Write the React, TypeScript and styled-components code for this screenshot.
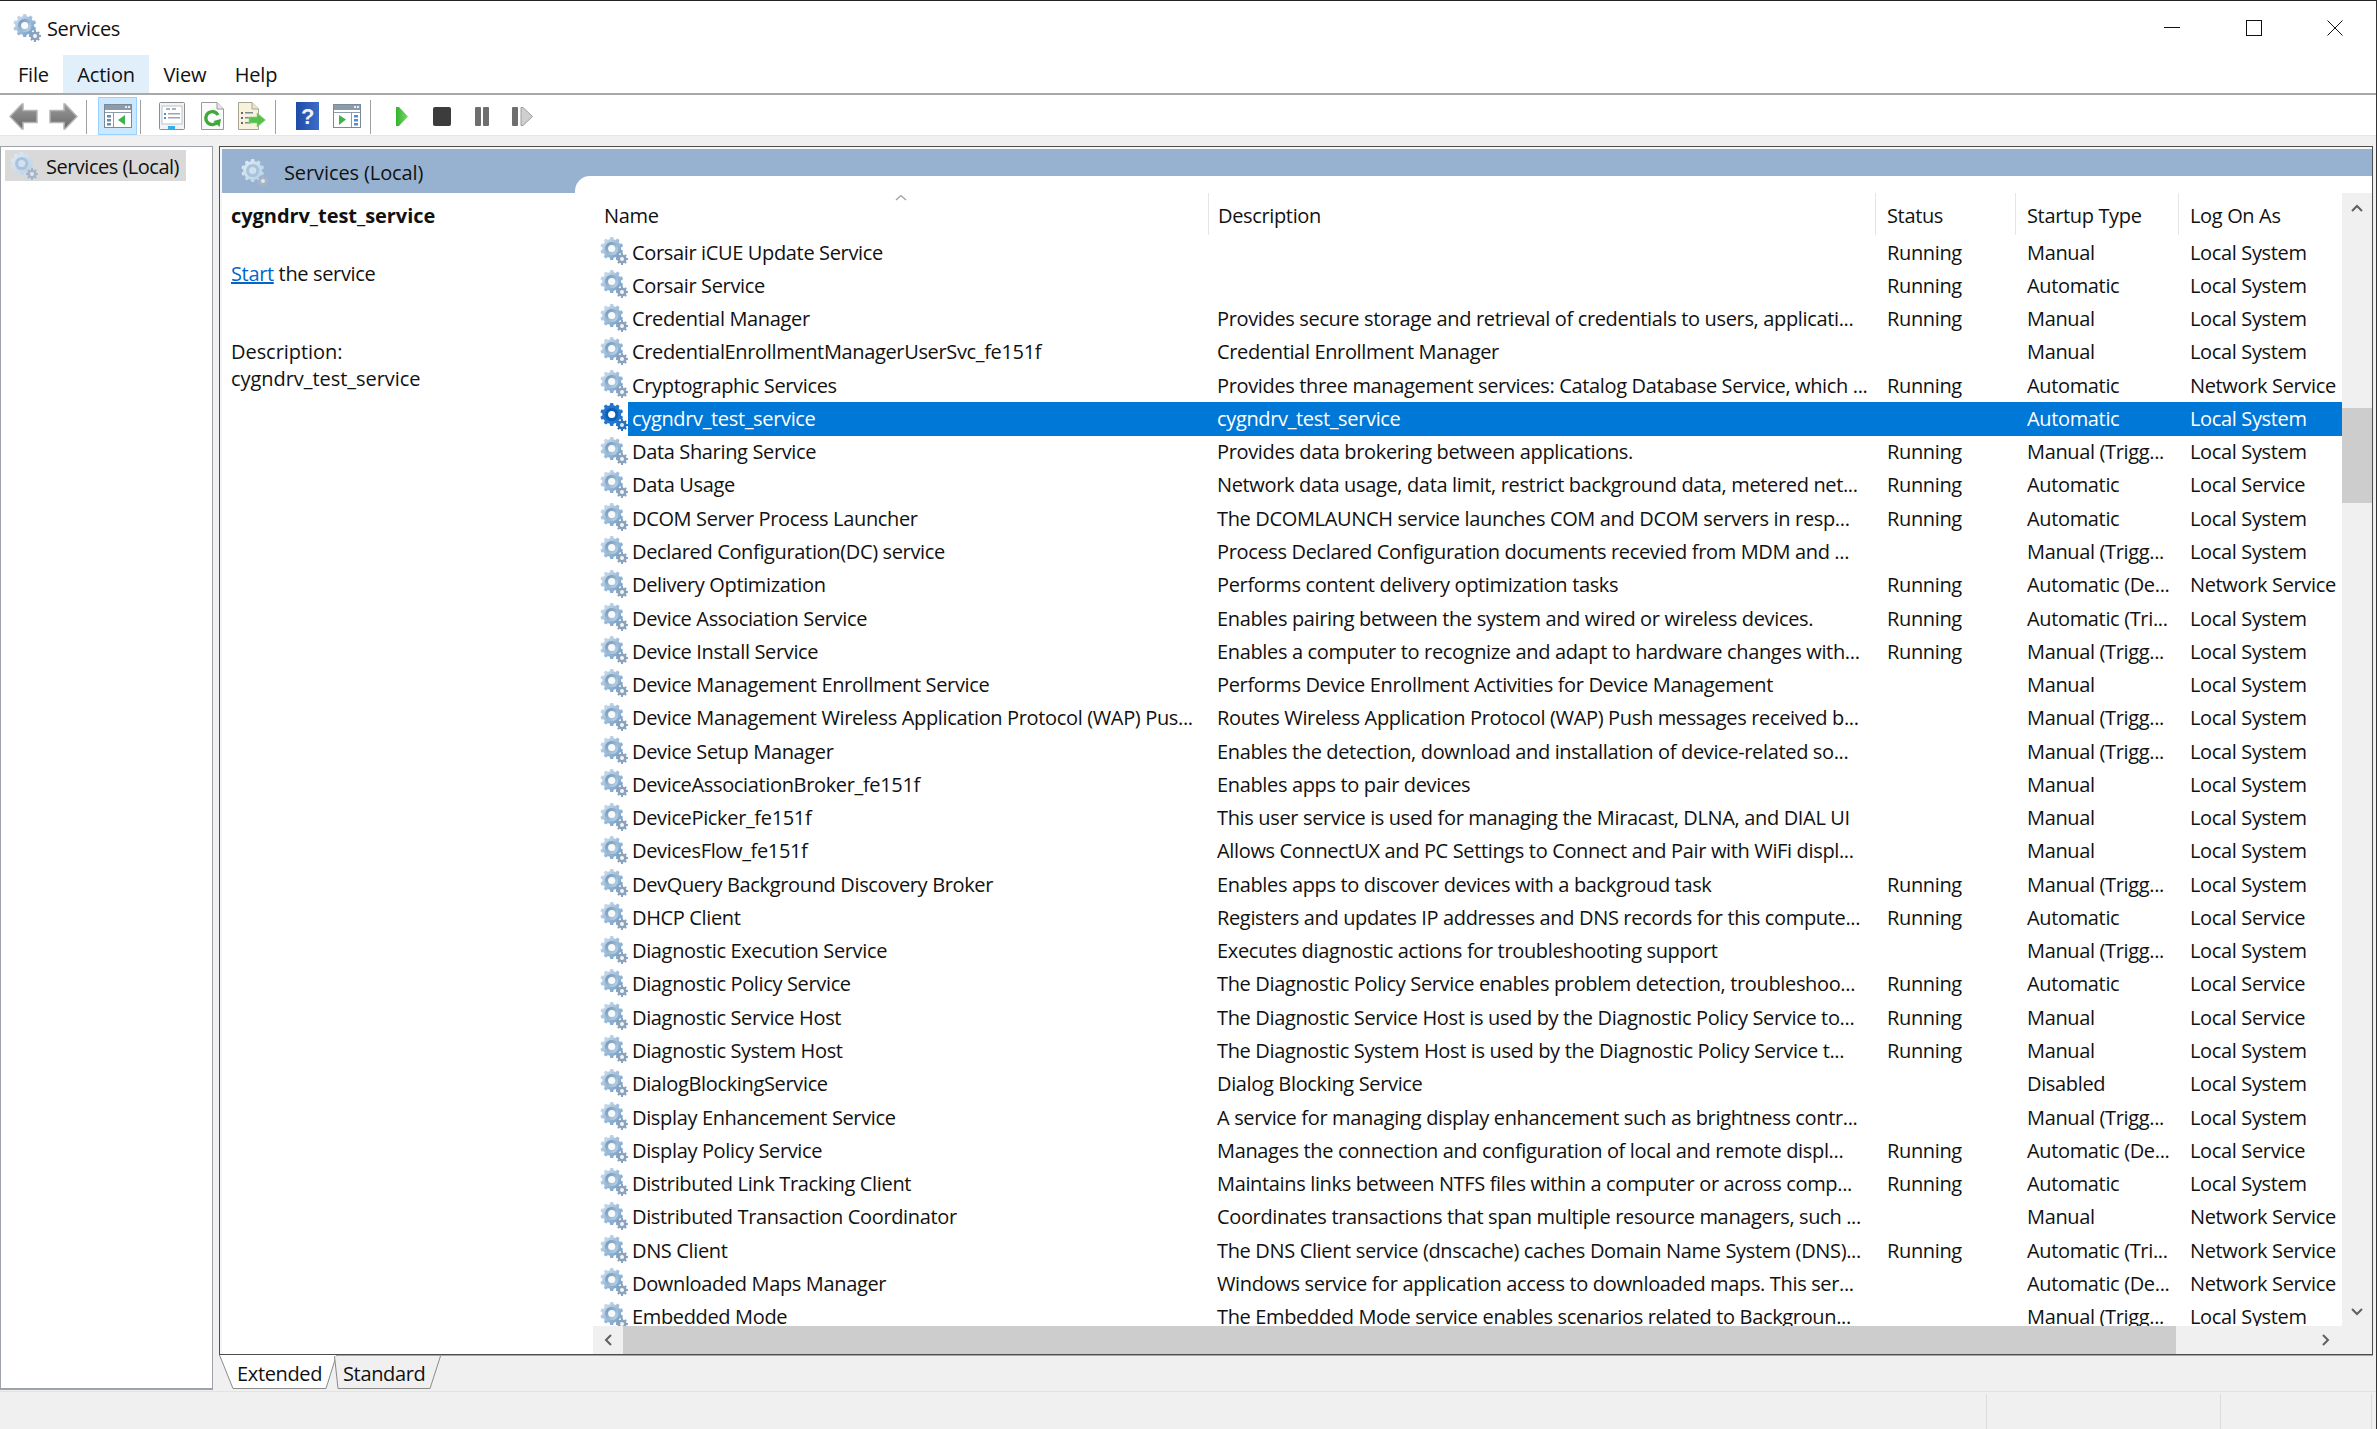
import React from 'react';
import styled, { createGlobalStyle } from 'styled-components';

const GlobalStyle = createGlobalStyle`
  html, body {
    margin: 0;
    padding: 0;
    background: #fff;
  }
  body {
    font-family: 'Open Sans', 'Noto Sans', 'Liberation Sans', sans-serif;
    font-size: 20px;
    letter-spacing: -0.35px;
    color: #111;
  }
`;

const Window = styled.div`
  box-sizing: border-box;
  width: 2377px;
  height: 1429px;
  display: flex;
  flex-direction: column;
  border-top: 1px solid #222;
  border-right: 1px solid #333;
  overflow: hidden;
`;

const TitleBar = styled.div`
  height: 54px;
  flex: none;
  display: flex;
  align-items: center;
  padding-left: 13px;
`;

const TitleText = styled.div`
  flex: 1;
  margin-left: 6px;
`;

const WinButton = styled.div`
  width: 81.5px;
  height: 54px;
  display: flex;
  align-items: center;
  justify-content: center;
`;

const MenuBar = styled.div`
  height: 38px;
  flex: none;
  display: flex;
  padding-left: 4px;
  border-bottom: 2px solid #a9a9a9;
`;

const MenuItem = styled.div<{ $open?: boolean }>`
  padding: 1px 14.5px 0 14px;
  display: flex;
  align-items: center;
  letter-spacing: -0.2px;
  background: ${(p) => (p.$open ? '#e1effb' : 'transparent')};
`;

const Toolbar = styled.div`
  height: 40px;
  flex: none;
  display: flex;
  align-items: flex-end;
  padding-left: 3px;
`;

const ToolButton = styled.div<{ $active?: boolean }>`
  box-sizing: border-box;
  width: ${(p) => (p.$active ? '39px' : '40px')};
  height: 38px;
  display: flex;
  align-items: center;
  justify-content: center;
  background: ${(p) => (p.$active ? '#cce8ff' : 'transparent')};
  border: 1px solid ${(p) => (p.$active ? '#99d1ff' : 'transparent')};
`;

const ToolSep = styled.div`
  width: 1px;
  height: 34px;
  margin: 0 11px 1px 3px;
  background: #a0a0a0;
`;

const Gutter = styled.div`
  height: 11px;
  flex: none;
  background: #f0f0f0;
  border-top: 1px solid #e6e6e6;
  box-sizing: border-box;
`;

const Main = styled.div`
  flex: 1;
  min-height: 0;
  display: flex;
  background: #f0f0f0;
`;

const TreePane = styled.div`
  box-sizing: border-box;
  width: 213px;
  margin-bottom: 1px;
  padding: 3px 0 0 4px;
  background: #fff;
  border: 1px solid #9ea3a9;
  border-bottom-width: 2px;
`;

const TreeItem = styled.div`
  width: 181px;
  height: 31px;
  display: flex;
  align-items: center;
  gap: 8px;
  padding: 1px 0 0 5px;
  box-sizing: border-box;
  background: #d9d9d9;
  white-space: nowrap;
  letter-spacing: -0.5px;
`;

const RightColumn = styled.div`
  flex: 1;
  min-width: 0;
  margin: 0 3px 0 6px;
  display: flex;
  flex-direction: column;
`;

const ConsolePane = styled.div`
  box-sizing: border-box;
  flex: 1;
  min-height: 0;
  display: flex;
  flex-direction: column;
  padding: 2px 0 0 2px;
  background: #f6f6f6;
  border: 1px solid #4d4d4d;
  box-shadow: 0 1px 0 #a6a6a6;
`;

const PaneHeader = styled.div`
  height: 44px;
  flex: none;
  display: flex;
  background: #97b2d0;
`;

const PaneTitle = styled.div`
  width: 353px;
  display: flex;
  align-items: flex-end;
  gap: 15px;
  padding: 0 0 6px 19px;
  box-sizing: border-box;
  letter-spacing: -0.1px;
  span {
    margin-bottom: 1px;
  }
`;

const PaneNotch = styled.div`
  flex: 1;
  margin-top: 27px;
  background: #fff;
  border-top-left-radius: 15px;
`;

const PaneBody = styled.div`
  flex: 1;
  min-height: 0;
  display: flex;
  background: #fff;
`;

const InfoPanel = styled.div`
  width: 371px;
  flex: none;
  box-sizing: border-box;
  padding: 9px 0 0 9px;
  line-height: 27px;
`;

const InfoTitle = styled.div`
  font-weight: 700;
  letter-spacing: -0.05px;
`;

const InfoAction = styled.div`
  margin-top: 31px;
`;

const InfoDesc = styled.div`
  margin-top: 51px;
  letter-spacing: -0.05px;
`;

const StartLink = styled.a`
  color: #0066cc;
  text-decoration: underline;
`;

const ListArea = styled.div`
  flex: 1;
  min-width: 0;
  display: flex;
  flex-direction: column;
`;

const ListTop = styled.div`
  flex: 1;
  min-height: 0;
  display: flex;
`;

const ListViewport = styled.div`
  flex: 1;
  min-width: 0;
  overflow: hidden;
`;

const ListHeader = styled.div`
  height: 43px;
  display: grid;
  grid-template-columns: 615px 667px 140px 163px 164px;
`;

const HeaderCell = styled.div<{ $inset: number; $first?: boolean }>`
  position: relative;
  height: 42px;
  display: flex;
  align-items: center;
  padding: 2px 0 0 ${(p) => p.$inset}px;
  box-sizing: border-box;
  border-left: ${(p) => (p.$first ? 'none' : '1px solid #e5e5e5')};
`;

const SortMark = styled.svg`
  position: absolute;
  left: 302px;
  top: 1px;
`;

const Row = styled.div`
  height: 33.27px;
  display: flex;
`;

const RowIcon = styled.div`
  width: 35px;
  flex: none;
  padding: 1px 0 0 7px;
  box-sizing: border-box;
`;

const RowBody = styled.div<{ $selected?: boolean }>`
  flex: 1;
  display: grid;
  grid-template-columns: 580px 667px 140px 163px 164px;
  align-items: center;
  background: ${(p) => (p.$selected ? '#0078d7' : 'transparent')};
  color: ${(p) => (p.$selected ? '#fff' : 'inherit')};
`;

const Cell = styled.div<{ $inset: number }>`
  padding: 0 0 1px ${(p) => p.$inset}px;
  white-space: nowrap;
  overflow: hidden;
`;

const VScrollbar = styled.div`
  width: 30px;
  flex: none;
  display: flex;
  flex-direction: column;
  background: #f0f0f0;
`;

const VThumb = styled.div`
  height: 95px;
  margin-top: 185px;
  background: #cdcdcd;
`;

const ScrollArrow = styled.div`
  height: 30px;
  display: flex;
  align-items: center;
  justify-content: center;
`;

const VTrack = styled.div`
  flex: 1;
`;

const HScrollbar = styled.div`
  height: 28px;
  flex: none;
  display: flex;
  align-items: stretch;
  background: #f0f0f0;
`;

const HArrow = styled.div<{ $width: number }>`
  width: ${(p) => p.$width}px;
  display: flex;
  align-items: center;
  justify-content: center;
`;

const HThumb = styled.div`
  width: 1553px;
  background: #cdcdcd;
`;

const HTrack = styled.div`
  flex: 1;
`;

const TabStrip = styled.div`
  height: 36px;
  flex: none;
  display: flex;
`;

const Tab = styled.div<{ $width: number; $lead: number; $overlap?: boolean }>`
  position: relative;
  width: ${(p) => p.$width}px;
  height: 35px;
  margin-left: ${(p) => (p.$overlap ? '-3px' : '0')};
  padding: 2px 0 0 ${(p) => p.$lead}px;
  box-sizing: border-box;
  display: flex;
  align-items: center;
`;

const TabShape = styled.svg`
  position: absolute;
  left: 0;
  top: 0;
`;

const TabLabel = styled.span`
  position: relative;
`;

const StatusBar = styled.div`
  height: 38px;
  flex: none;
  display: flex;
  box-sizing: border-box;
  background: #f0f0f0;
  border-top: 1px solid #e3e3e3;
  padding-right: 4px;
`;

const StatusCell = styled.div<{ $width?: number }>`
  ${(p) => (p.$width ? `width: ${p.$width}px;` : 'flex: 1;')}
  margin-top: 2px;
  border-right: 1px solid #dcdcdc;
`;

const HiddenDefs = styled.svg`
  position: absolute;
  width: 0;
  height: 0;
`;

// one tooth = 4 corners, good enough for a 28px icon
function gearPath(cx: number, cy: number, ro: number, ri: number, teeth: number) {
  const pts: string[] = [];
  const step = (Math.PI * 2) / teeth;
  for (let i = 0; i < teeth; i++) {
    const a = i * step - Math.PI / 2;
    const corners: [number, number][] = [
      [a - step * 0.34, ri],
      [a - step * 0.2, ro],
      [a + step * 0.2, ro],
      [a + step * 0.34, ri],
    ];
    corners.forEach(([t, r]) => {
      pts.push(`${(cx + Math.cos(t) * r).toFixed(2)},${(cy + Math.sin(t) * r).toFixed(2)}`);
    });
  }
  return `M${pts.join('L')}Z`;
}

const bigGear = gearPath(11.7, 11.5, 11.5, 9.4, 10);
const smallGear = gearPath(22, 22, 6, 4.4, 8);

type GearTone = 'normal' | 'selected' | 'pale';

const gearColors: Record<GearTone, { ring: string; core: string; hole: string; small: string; smallHole: string }> = {
  normal: { ring: 'url(#gearRing)', core: 'url(#gearCore)', hole: '#f6fafd', small: '#8aa2bb', smallHole: '#f2f5f8' },
  selected: { ring: '#2475cf', core: '#0b5fb5', hole: '#fff', small: '#2a6fb8', smallHole: '#d8e8f7' },
  pale: { ring: 'url(#gearPale)', core: '#a8c3dc', hole: '#d3e1ee', small: '#a3b5c7', smallHole: '#dfe7ef' },
};

function Gear({ tone = 'normal' }: { tone?: GearTone }) {
  const c = gearColors[tone];
  return (
    <svg width='28' height='28' viewBox='0 0 28 28' style={{ flex: 'none', display: 'block' }}>
      <path d={bigGear} fill={c.ring} />
      <circle cx='11.7' cy='11.5' r='6.6' fill={c.core} />
      <circle cx='11.7' cy='11.5' r='3.6' fill={c.hole} />
      <path d={smallGear} fill={c.small} />
      <circle cx='22' cy='22' r='2' fill={c.smallHole} />
    </svg>
  );
}

function Chevron({ dir, color = '#606060' }: { dir: 'up' | 'down' | 'left' | 'right'; color?: string }) {
  const d = {
    up: 'M1 7 L6 2 L11 7',
    down: 'M1 2 L6 7 L11 2',
    left: 'M7 1 L2 6 L7 11',
    right: 'M2 1 L7 6 L2 11',
  }[dir];
  const horizontal = dir === 'up' || dir === 'down';
  return (
    <svg width={horizontal ? 12 : 9} height={horizontal ? 9 : 12} viewBox={horizontal ? '0 0 12 9' : '0 0 9 12'}>
      <path d={d} fill='none' stroke={color} strokeWidth='2' />
    </svg>
  );
}

function ArrowIcon({ flip }: { flip?: boolean }) {
  return (
    <svg width='29' height='27' viewBox='0 0 29 27' style={flip ? { transform: 'scaleX(-1)' } : undefined}>
      <path
        d='M1 13.5 L13 1 L14 1 L14 7.5 L28 7.5 L28 19.5 L14 19.5 L14 26 L13 26 Z'
        fill='url(#arrowFill)'
        stroke='#b5b5b5'
        strokeWidth='1.5'
      />
    </svg>
  );
}

function PaneToggleIcon({ right }: { right?: boolean }) {
  return (
    <svg width='28' height='24' viewBox='0 0 28 24'>
      <rect x='0.5' y='0.5' width='27' height='23' fill='#fff' stroke='#7b8a99' />
      <rect x='1' y='1' width='26' height='5' fill='#8e9bab' />
      <rect x='21' y='2' width='2' height='2' fill='#e8edf2' />
      <rect x='24' y='2' width='2' height='2' fill='#e8edf2' />
      <rect x='1' y='8' width='26' height='1' fill='#8e9bab' />
      {right ? (
        <>
          <path d='M6 11 L13 15.5 L6 21 Z' fill='#3bb54a' />
          <rect x='18' y='9' width='1' height='14' fill='#8e9bab' />
          <rect x='21' y='11' width='4' height='2.5' fill='#4f8fd0' />
          <rect x='21' y='15' width='4' height='2.5' fill='#4f8fd0' />
          <rect x='21' y='19' width='4' height='2.5' fill='#4f8fd0' />
        </>
      ) : (
        <>
          <rect x='3' y='11' width='4' height='2.5' fill='#6c8cab' />
          <rect x='3' y='15' width='4' height='2.5' fill='#6c8cab' />
          <rect x='3' y='19' width='4' height='2.5' fill='#6c8cab' />
          <rect x='9' y='9' width='1' height='14' fill='#8e9bab' />
          <path d='M21 11 L14 16 L21 21 Z' fill='#3bb54a' />
        </>
      )}
    </svg>
  );
}

function PropertiesIcon() {
  return (
    <svg width='26' height='28' viewBox='0 0 26 28'>
      <rect x='0.5' y='0.5' width='25' height='27' rx='1' fill='#f1f3f5' stroke='#8d8d8d' />
      <rect x='3' y='4' width='20' height='18' fill='#fff' stroke='#b8c2cc' />
      <rect x='7' y='6' width='4' height='2' fill='#a9b4bf' />
      <rect x='13' y='6' width='4' height='2' fill='#a9b4bf' />
      <rect x='5' y='11' width='2' height='2' fill='#4f8fd0' />
      <rect x='9' y='11' width='12' height='1.5' fill='#9aa6b2' />
      <rect x='5' y='15' width='2' height='2' fill='#4f8fd0' />
      <rect x='9' y='15' width='12' height='1.5' fill='#9aa6b2' />
      <rect x='9' y='24' width='7' height='3' fill='#35aee8' />
    </svg>
  );
}

function RefreshIcon() {
  return (
    <svg width='23' height='28' viewBox='0 0 23 28'>
      <path d='M0.5 0.5 H16 L22.5 7 V27.5 H0.5 Z' fill='#fbfbfb' stroke='#9a9a9a' />
      <path d='M16 0.5 V7 H22.5' fill='#e6e6e6' stroke='#9a9a9a' />
      <path d='M16.5 20 A6.5 6.5 0 1 1 17 13' fill='none' stroke='#3fa83a' strokeWidth='3.4' />
      <path d='M12.5 19 L20 17 L18.5 25 Z' fill='#3fa83a' />
    </svg>
  );
}

function ExportIcon() {
  return (
    <svg width='28' height='28' viewBox='0 0 28 28'>
      <path d='M0.5 0.5 H14 L20.5 7 V27.5 H0.5 Z' fill='#f8f2dc' stroke='#a8a393' />
      <path d='M14 0.5 V7 H20.5' fill='#ebe5cf' stroke='#a8a393' />
      <rect x='3' y='10' width='2' height='2' fill='#5c6a78' />
      <rect x='7' y='10' width='8' height='1.5' fill='#7e8994' />
      <rect x='3' y='15' width='2' height='2' fill='#5c6a78' />
      <rect x='7' y='15' width='6' height='1.5' fill='#7e8994' />
      <rect x='3' y='20' width='2' height='2' fill='#5c6a78' />
      <rect x='7' y='20' width='6' height='1.5' fill='#7e8994' />
      <path d='M11 15 H19 V11 L27.5 18 L19 25 V21 H11 Z' fill='#57c14d' stroke='#8bd683' strokeWidth='0.6' />
    </svg>
  );
}

function HelpIcon() {
  return (
    <svg width='23' height='28' viewBox='0 0 23 28'>
      <rect width='23' height='28' fill='url(#helpFill)' />
      <text x='11.5' y='22' textAnchor='middle' fontFamily='Liberation Sans, sans-serif' fontSize='22' fontWeight='700' fill='#f2f2f2'>
        ?
      </text>
    </svg>
  );
}

function PlayIcon() {
  return (
    <svg width='12' height='19' viewBox='0 0 12 19'>
      <path d='M0 0 H3 L12 9.5 L3 19 H0 Z' fill='url(#playFill)' />
    </svg>
  );
}

function StopIcon() {
  return (
    <svg width='18' height='19' viewBox='0 0 18 19'>
      <rect width='18' height='19' rx='2' fill='#3c3c3c' />
    </svg>
  );
}

function PauseIcon() {
  return (
    <svg width='14' height='19' viewBox='0 0 14 19'>
      <rect width='6' height='19' rx='1' fill='#6e6e6e' />
      <rect x='8' width='6' height='19' rx='1' fill='#6e6e6e' />
    </svg>
  );
}

function StepIcon() {
  return (
    <svg width='21' height='19' viewBox='0 0 21 19'>
      <rect width='6' height='19' rx='1' fill='#6e6e6e' />
      <path d='M9 0.5 H11 L20.5 9.5 L11 18.5 H9 Z' fill='#cfcfcf' stroke='#9c9c9c' />
    </svg>
  );
}

type Service = [string, string, string, string, string];

const services: Service[] = [
  ['Corsair iCUE Update Service', '', 'Running', 'Manual', 'Local System'],
  ['Corsair Service', '', 'Running', 'Automatic', 'Local System'],
  ['Credential Manager', 'Provides secure storage and retrieval of credentials to users, applicati...', 'Running', 'Manual', 'Local System'],
  ['CredentialEnrollmentManagerUserSvc_fe151f', 'Credential Enrollment Manager', '', 'Manual', 'Local System'],
  ['Cryptographic Services', 'Provides three management services: Catalog Database Service, which ...', 'Running', 'Automatic', 'Network Service'],
  ['cygndrv_test_service', 'cygndrv_test_service', '', 'Automatic', 'Local System'],
  ['Data Sharing Service', 'Provides data brokering between applications.', 'Running', 'Manual (Trigg...', 'Local System'],
  ['Data Usage', 'Network data usage, data limit, restrict background data, metered net...', 'Running', 'Automatic', 'Local Service'],
  ['DCOM Server Process Launcher', 'The DCOMLAUNCH service launches COM and DCOM servers in resp...', 'Running', 'Automatic', 'Local System'],
  ['Declared Configuration(DC) service', 'Process Declared Configuration documents recevied from MDM and ...', '', 'Manual (Trigg...', 'Local System'],
  ['Delivery Optimization', 'Performs content delivery optimization tasks', 'Running', 'Automatic (De...', 'Network Service'],
  ['Device Association Service', 'Enables pairing between the system and wired or wireless devices.', 'Running', 'Automatic (Tri...', 'Local System'],
  ['Device Install Service', 'Enables a computer to recognize and adapt to hardware changes with...', 'Running', 'Manual (Trigg...', 'Local System'],
  ['Device Management Enrollment Service', 'Performs Device Enrollment Activities for Device Management', '', 'Manual', 'Local System'],
  ['Device Management Wireless Application Protocol (WAP) Pus...', 'Routes Wireless Application Protocol (WAP) Push messages received b...', '', 'Manual (Trigg...', 'Local System'],
  ['Device Setup Manager', 'Enables the detection, download and installation of device-related so...', '', 'Manual (Trigg...', 'Local System'],
  ['DeviceAssociationBroker_fe151f', 'Enables apps to pair devices', '', 'Manual', 'Local System'],
  ['DevicePicker_fe151f', 'This user service is used for managing the Miracast, DLNA, and DIAL UI', '', 'Manual', 'Local System'],
  ['DevicesFlow_fe151f', 'Allows ConnectUX and PC Settings to Connect and Pair with WiFi displ...', '', 'Manual', 'Local System'],
  ['DevQuery Background Discovery Broker', 'Enables apps to discover devices with a backgroud task', 'Running', 'Manual (Trigg...', 'Local System'],
  ['DHCP Client', 'Registers and updates IP addresses and DNS records for this compute...', 'Running', 'Automatic', 'Local Service'],
  ['Diagnostic Execution Service', 'Executes diagnostic actions for troubleshooting support', '', 'Manual (Trigg...', 'Local System'],
  ['Diagnostic Policy Service', 'The Diagnostic Policy Service enables problem detection, troubleshoo...', 'Running', 'Automatic', 'Local Service'],
  ['Diagnostic Service Host', 'The Diagnostic Service Host is used by the Diagnostic Policy Service to...', 'Running', 'Manual', 'Local Service'],
  ['Diagnostic System Host', 'The Diagnostic System Host is used by the Diagnostic Policy Service t...', 'Running', 'Manual', 'Local System'],
  ['DialogBlockingService', 'Dialog Blocking Service', '', 'Disabled', 'Local System'],
  ['Display Enhancement Service', 'A service for managing display enhancement such as brightness contr...', '', 'Manual (Trigg...', 'Local System'],
  ['Display Policy Service', 'Manages the connection and configuration of local and remote displ...', 'Running', 'Automatic (De...', 'Local Service'],
  ['Distributed Link Tracking Client', 'Maintains links between NTFS files within a computer or across comp...', 'Running', 'Automatic', 'Local System'],
  ['Distributed Transaction Coordinator', 'Coordinates transactions that span multiple resource managers, such ...', '', 'Manual', 'Network Service'],
  ['DNS Client', 'The DNS Client service (dnscache) caches Domain Name System (DNS)...', 'Running', 'Automatic (Tri...', 'Network Service'],
  ['Downloaded Maps Manager', 'Windows service for application access to downloaded maps. This ser...', '', 'Automatic (De...', 'Network Service'],
  ['Embedded Mode', 'The Embedded Mode service enables scenarios related to Backgroun...', '', 'Manual (Trigg...', 'Local System'],
];

const columnInsets = [4, 9, 12, 12, 12];

function App() {
  return (
    <Window>
      <GlobalStyle />
      <HiddenDefs aria-hidden='true'>
        <defs>
          <linearGradient id='gearRing' x1='0' y1='0' x2='1' y2='1'>
            <stop offset='0' stopColor='#dbe7f2' />
            <stop offset='0.5' stopColor='#9dbddb' />
            <stop offset='1' stopColor='#6796c4' />
          </linearGradient>
          <linearGradient id='gearCore' x1='0' y1='0' x2='1' y2='1'>
            <stop offset='0' stopColor='#6a8fb1' />
            <stop offset='1' stopColor='#c4d9ea' />
          </linearGradient>
          <linearGradient id='gearPale' x1='0' y1='0' x2='1' y2='1'>
            <stop offset='0' stopColor='#e4edf5' />
            <stop offset='1' stopColor='#b5cee4' />
          </linearGradient>
          <linearGradient id='arrowFill' x1='0' y1='0' x2='0' y2='1'>
            <stop offset='0' stopColor='#9a9a9a' />
            <stop offset='1' stopColor='#6a6a6a' />
          </linearGradient>
          <linearGradient id='helpFill' x1='0' y1='0' x2='1' y2='0'>
            <stop offset='0' stopColor='#1f4aa8' />
            <stop offset='1' stopColor='#3d6cc8' />
          </linearGradient>
          <linearGradient id='playFill' x1='0' y1='0' x2='1' y2='0'>
            <stop offset='0' stopColor='#2fb52b' />
            <stop offset='1' stopColor='#7fd46f' />
          </linearGradient>
        </defs>
      </HiddenDefs>

      <TitleBar>
        <Gear />
        <TitleText>Services</TitleText>
        <WinButton>
          <svg width='16' height='2' viewBox='0 0 16 2'>
            <rect width='16' height='1' fill='#111' />
          </svg>
        </WinButton>
        <WinButton>
          <svg width='16' height='16' viewBox='0 0 16 16'>
            <rect x='0.5' y='0.5' width='15' height='15' fill='none' stroke='#111' />
          </svg>
        </WinButton>
        <WinButton>
          <svg width='16' height='16' viewBox='0 0 16 16'>
            <path d='M0.5 0.5 L15.5 15.5 M15.5 0.5 L0.5 15.5' stroke='#111' fill='none' />
          </svg>
        </WinButton>
      </TitleBar>

      <MenuBar>
        <MenuItem>File</MenuItem>
        <MenuItem $open>Action</MenuItem>
        <MenuItem>View</MenuItem>
        <MenuItem>Help</MenuItem>
      </MenuBar>

      <Toolbar>
        <ToolButton><ArrowIcon /></ToolButton>
        <ToolButton><ArrowIcon flip /></ToolButton>
        <ToolSep />
        <ToolButton $active><PaneToggleIcon /></ToolButton>
        <ToolSep />
        <ToolButton><PropertiesIcon /></ToolButton>
        <ToolButton><RefreshIcon /></ToolButton>
        <ToolButton><ExportIcon /></ToolButton>
        <ToolSep />
        <ToolButton><HelpIcon /></ToolButton>
        <ToolButton><PaneToggleIcon right /></ToolButton>
        <ToolSep />
        <ToolButton><PlayIcon /></ToolButton>
        <ToolButton><StopIcon /></ToolButton>
        <ToolButton><PauseIcon /></ToolButton>
        <ToolButton><StepIcon /></ToolButton>
      </Toolbar>
      <Gutter />

      <Main>
        <TreePane>
          <TreeItem>
            <Gear tone='pale' />
            Services (Local)
          </TreeItem>
        </TreePane>

        <RightColumn>
          <ConsolePane>
            <PaneHeader>
              <PaneTitle>
                <Gear tone='pale' />
                <span>Services (Local)</span>
              </PaneTitle>
              <PaneNotch />
            </PaneHeader>
            <PaneBody>
              <InfoPanel>
                <InfoTitle>cygndrv_test_service</InfoTitle>
                <InfoAction>
                  <StartLink>Start</StartLink> the service
                </InfoAction>
                <InfoDesc>
                  Description:
                  <br />
                  cygndrv_test_service
                </InfoDesc>
              </InfoPanel>

              <ListArea>
                <ListTop>
                  <ListViewport>
                    <ListHeader>
                      <HeaderCell $inset={11} $first>
                        Name
                        <SortMark width='12' height='8' viewBox='0 0 12 8'>
                          <path d='M1 6 L6 1.5 L11 6' fill='none' stroke='#a0a0a0' strokeWidth='1.3' />
                        </SortMark>
                      </HeaderCell>
                      <HeaderCell $inset={9}>Description</HeaderCell>
                      <HeaderCell $inset={11}>Status</HeaderCell>
                      <HeaderCell $inset={11}>Startup Type</HeaderCell>
                      <HeaderCell $inset={11}>Log On As</HeaderCell>
                    </ListHeader>
                    {services.map((service) => {
                      const selected = service[0] === 'cygndrv_test_service';
                      return (
                        <Row key={service[0]}>
                          <RowIcon>
                            <Gear tone={selected ? 'selected' : 'normal'} />
                          </RowIcon>
                          <RowBody $selected={selected}>
                            {service.map((text, index) => (
                              <Cell key={index} $inset={columnInsets[index]}>
                                {text}
                              </Cell>
                            ))}
                          </RowBody>
                        </Row>
                      );
                    })}
                  </ListViewport>
                  <VScrollbar>
                    <ScrollArrow><Chevron dir='up' /></ScrollArrow>
                    <VThumb />
                    <VTrack />
                    <ScrollArrow><Chevron dir='down' /></ScrollArrow>
                  </VScrollbar>
                </ListTop>
                <HScrollbar>
                  <HArrow $width={30}><Chevron dir='left' /></HArrow>
                  <HThumb />
                  <HTrack />
                  <HArrow $width={34}><Chevron dir='right' /></HArrow>
                  <HArrow $width={30} />
                </HScrollbar>
              </ListArea>
            </PaneBody>
          </ConsolePane>

          <TabStrip>
            <Tab $width={118} $lead={18}>
              <TabShape width='118' height='35' viewBox='0 0 118 35'>
                <path d='M0.5 0 L14 33.5 L107 33.5 L117.5 0 Z' fill='#fff' />
                <path d='M0.5 0 L14 33.5 L107 33.5 L117.5 0' fill='none' stroke='#8a8a8a' />
              </TabShape>
              <TabLabel>Extended</TabLabel>
            </Tab>
            <Tab $width={107} $lead={9} $overlap>
              <TabShape width='107' height='35' viewBox='0 0 107 35'>
                <path d='M0.5 1 L4 33.5 L96 33.5 L106.5 1' fill='#f0f0f0' stroke='#8a8a8a' />
              </TabShape>
              <TabLabel>Standard</TabLabel>
            </Tab>
          </TabStrip>
        </RightColumn>
      </Main>

      <StatusBar>
        <StatusCell />
        <StatusCell $width={233} />
        <StatusCell $width={150} />
      </StatusBar>
    </Window>
  );
}

export default App;
